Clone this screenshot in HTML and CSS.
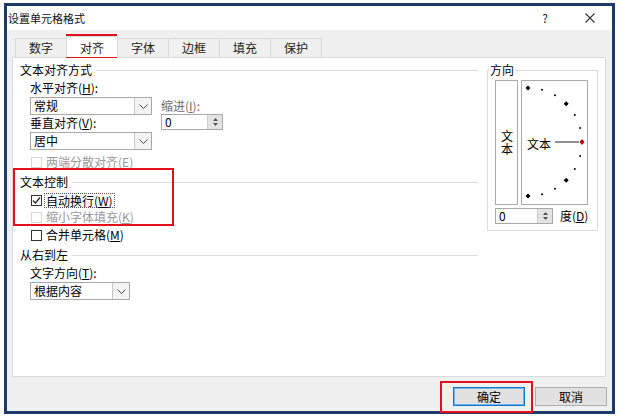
FILE: index.html
```html
<!DOCTYPE html>
<html lang="zh-CN">
<head>
<meta charset="utf-8">
<title>设置单元格格式</title>
<link rel="stylesheet" href="styles.css">
</head>
<body>
<div class="win">
  <div class="titlebar">
    <span class="title">设置单元格格式</span>
    <span class="help">?</span>
    <span class="close"><svg width="10" height="10" viewBox="0 0 10 10"><path d="M0.5 0.5 L9.5 9.5 M9.5 0.5 L0.5 9.5" stroke="#333" stroke-width="1.1" fill="none"/></svg></span>
  </div>
  <div class="body">
    <div class="tabs">
      <div class="tab">数字</div>
      <div class="tab active">对齐</div>
      <div class="tab">字体</div>
      <div class="tab">边框</div>
      <div class="tab">填充</div>
      <div class="tab">保护</div>
    </div>
    <div class="panel">
      <div class="left">
        <div class="ghead g1">文本对齐方式</div>
        <div class="alignrow">
          <div class="colA">
            <div class="lbl">水平对齐(<u>H</u>):</div>
            <div class="select w122"><span class="val">常规</span><span class="dd"><svg width="9" height="5" viewBox="0 0 9 5"><path d="M0.5 0.5 L4.5 4.5 L8.5 0.5" stroke="#444" fill="none"/></svg></span></div>
            <div class="lbl">垂直对齐(<u>V</u>):</div>
            <div class="select w122 s2"><span class="val">居中</span><span class="dd"><svg width="9" height="5" viewBox="0 0 9 5"><path d="M0.5 0.5 L4.5 4.5 L8.5 0.5" stroke="#444" fill="none"/></svg></span></div>
          </div>
          <div class="colB">
            <div class="lbl dim">缩进(<u>I</u>):</div>
            <div class="spin w62"><span class="val">0</span><span class="sb"><svg width="9" height="12" viewBox="0 0 9 12"><path d="M4.5 2 L7 5 L2 5 Z M4.5 10 L7 7 L2 7 Z" fill="#555"/></svg></span></div>
          </div>
        </div>
        <div class="chk dis c1"><span class="box"></span>两端分散对齐(<u>E</u>)</div>
        <div class="ghead g2">文本控制</div>
        <div class="chk c2"><span class="box"><svg width="9" height="9" viewBox="0 0 9 9"><path d="M1 4.5 L3.5 7 L8 1.5" stroke="#222" stroke-width="1.2" fill="none"/></svg></span><span class="focus">自动换行(<u>W</u>)</span></div>
        <div class="chk dis c3"><span class="box"></span>缩小字体填充(<u>K</u>)</div>
        <div class="chk c4"><span class="box"></span>合并单元格(<u>M</u>)</div>
        <div class="ghead g3">从右到左</div>
        <div class="lbl ind t1">文字方向(<u>T</u>):</div>
        <div class="select w100 ind s3"><span class="val">根据内容</span><span class="dd"><svg width="9" height="5" viewBox="0 0 9 5"><path d="M0.5 0.5 L4.5 4.5 L8.5 0.5" stroke="#444" fill="none"/></svg></span></div>
      </div>
      <fieldset class="orient">
        <legend>方向</legend>
        <div class="dialrow">
          <div class="vbox"><span class="vtext">文本</span></div>
          <div class="dial">
            <svg width="65" height="123" viewBox="1 1 65 123">
              <g fill="#000">
                <path d="M7 5.5 L9.5 8 L7 10.5 L4.5 8 Z"/>
                <path d="M45.2 21.3 L47.7 23.8 L45.2 26.3 L42.7 23.8 Z"/>
                <path d="M45.2 97.7 L47.7 100.2 L45.2 102.7 L42.7 100.2 Z"/>
                <path d="M7 113.5 L9.5 116 L7 118.5 L4.5 116 Z"/>
                <circle cx="21" cy="9.8" r="1"/>
                <circle cx="34" cy="15.2" r="1"/>
                <circle cx="53.8" cy="35" r="1"/>
                <circle cx="59.2" cy="48" r="1"/>
                <circle cx="59.2" cy="76" r="1"/>
                <circle cx="53.8" cy="89" r="1"/>
                <circle cx="34" cy="108.8" r="1"/>
                <circle cx="21" cy="114.2" r="1"/>
              </g>
              <path d="M34 62 L58 62" stroke="#222" stroke-width="1"/>
              <path d="M61 59 L63.5 62 L61 65 L58.5 62 Z" fill="#c00000"/>
            </svg>
            <span class="dialtext">文本</span>
          </div>
        </div>
        <div class="degrow">
          <div class="spin w58"><span class="val">0</span><span class="sb"><svg width="9" height="12" viewBox="0 0 9 12"><path d="M4.5 2 L7 5 L2 5 Z M4.5 10 L7 7 L2 7 Z" fill="#555"/></svg></span></div>
          <span class="deg">度(<u>D</u>)</span>
        </div>
      </fieldset>
    </div>
    <div class="footer">
      <button class="btn ok">确定</button>
      <button class="btn">取消</button>
    </div>
  </div>
</div>
<div class="mark m1"></div>
<div class="mark m2"></div>
<div class="mark m3"></div>
</body>
</html>
```
FILE: styles.css
```css
* { box-sizing: border-box; margin: 0; padding: 0; }
html, body { width: 620px; height: 420px; background: #fff; overflow: hidden; }
body {
  font-family: "Noto Sans CJK SC", "Microsoft YaHei", sans-serif;
  font-size: 12px;
  line-height: 16px;
  color: #000;
  position: relative;
}
u { text-decoration: underline; text-underline-offset: 1px; }

.win {
  margin: 3px 0 0 4px;
  width: 611px;
  height: 411px;
  border: 3px solid #1c3a6a;
  background: #f0f0f0;
  display: flex;
  flex-direction: column;
}
.titlebar {
  height: 24px;
  background: #fff;
  display: flex;
  align-items: center;
  padding-left: 1px;
  flex: none;
}
.title { flex: 1; font-size: 11px; color: #111; }
.help { width: 12px; text-align: center; font-size: 12px; color: #222; }
.close { width: 10px; height: 10px; margin-left: 34px; margin-right: 17px; display: flex; }

.body { flex: 1; display: flex; flex-direction: column; }
.tabs { display: flex; margin: 8px 0 0 8px; height: 19px; position: relative; z-index: 1; }
.tab {
  width: 52px;
  height: 19px;
  border: 1px solid #d9d9d9;
  border-bottom: none;
  margin-right: -1px;
  background: #f0f0f0;
  text-align: center;
  line-height: 18px;
  color: #222;
}
.tab.active {
  background: #fff;
  height: 21px;
  margin-top: -2px;
  line-height: 22px;
  position: relative;
}
.panel {
  margin: 0 6px 0 5px;
  height: 320px;
  background: #fff;
  border: 1px solid #d9d9d9;
  display: flex;
  padding-left: 7px;
  align-items: flex-start;
}
.left { width: 458px; display: flex; flex-direction: column; }
.ghead { display: flex; align-items: center; height: 16px; }
.ghead::after { content: ""; flex: 1; height: 1px; background: #dcdcdc; margin-left: 4px; }
.g1 { margin-top: 4px; }
.g2 { margin-top: 4px; }
.g3 { margin-top: 4px; }
.lbl { height: 16px; white-space: nowrap; }
.dim { color: #6d6d6d; }
.ind { margin-left: 10px; }

.alignrow { display: flex; margin: 2px 0 0 10px; }
.colA { display: flex; flex-direction: column; }
.colB { display: flex; flex-direction: column; margin-left: 9px; padding-top: 18px; }
.select {
  height: 18px;
  border: 1px solid #a9a9a9;
  display: flex;
  margin-top: 1px;
  background: #fff;
}
.w122 { width: 122px; }
.w100 { width: 100px; }
.select .val { flex: 1; padding-left: 3px; line-height: 16px; }
.select .dd {
  width: 17px;
  border-left: 1px solid #c8c8c8;
  background: #f3f3f3;
  display: flex;
  align-items: center;
  justify-content: center;
}
.s3 { margin-top: 1px; }
.t1 { margin-top: 2px; }

.spin {
  height: 16px;
  border: 1px solid #a9a9a9;
  display: flex;
  background: #fff;
}
.w62 { width: 62px; }
.w58 { width: 58px; }
.spin .val { flex: 1; padding-left: 3px; line-height: 14px; }
.spin .sb {
  width: 15px;
  background: #e3e3e3;
  border-left: 1px solid #cfcfcf;
  display: flex;
  align-items: center;
  justify-content: center;
}

.chk { display: flex; align-items: center; height: 16px; margin-left: 10px; white-space: nowrap; }
.chk .box {
  width: 11px;
  height: 11px;
  border: 1px solid #333;
  margin: 0 4px 0 1px;
  display: flex;
  align-items: center;
  justify-content: center;
  background: #fff;
}
.chk.dis { color: #9a9a9a; }
.chk.dis .box { border-color: #d6d6d6; }
.focus { border: 1px dotted #555; margin-left: -2px; padding: 0 1px; line-height: 13px; }
.c1 { margin-top: 4px; }
.c2 { margin-top: 2px; }
.c3 { margin-top: 1px; }
.c4 { margin-top: 2px; }

.orient {
  width: 111px;
  margin: 4px 0 0 9px;
  border: 1px solid #dcdcdc;
  padding: 2px 7px 6px 7px;
  min-width: 0;
}
.orient legend { margin-left: -6px; padding: 0 1px; line-height: 16px; }
.dialrow { display: flex; gap: 3px; }
.vbox {
  width: 23px;
  height: 125px;
  border: 1px solid #a9a9a9;
  display: flex;
  align-items: center;
  justify-content: center;
}
.vtext { writing-mode: vertical-rl; text-orientation: upright; letter-spacing: 1px; line-height: 16px; }
.dial {
  width: 67px;
  height: 125px;
  border: 1px solid #a9a9a9;
  position: relative;
}
.dial svg { display: block; }
.dialtext { position: absolute; left: 5px; top: 55px; line-height: 16px; }
.degrow { display: flex; align-items: center; margin-top: 3px; }
.deg { margin-left: 7px; }

.footer { display: flex; justify-content: flex-end; padding: 10px 5px 0 0; gap: 10px; }
.btn {
  width: 72px;
  height: 19px;
  font: inherit;
  line-height: 15px;
  background: #e1e1e1;
  border: 1px solid #adadad;
  color: #000;
}
.btn.ok { border-color: #0078d7; box-shadow: inset 0 0 0 1px rgba(0, 120, 215, 0.45); }

.mark { position: absolute; border: 2px solid #e3101a; }
.m1 { left: 66px; top: 34px; width: 51px; height: 24px; }
.m2 { left: 13px; top: 168px; width: 161px; height: 58px; }
.m3 { left: 440px; top: 381px; width: 93px; height: 32px; }
```
